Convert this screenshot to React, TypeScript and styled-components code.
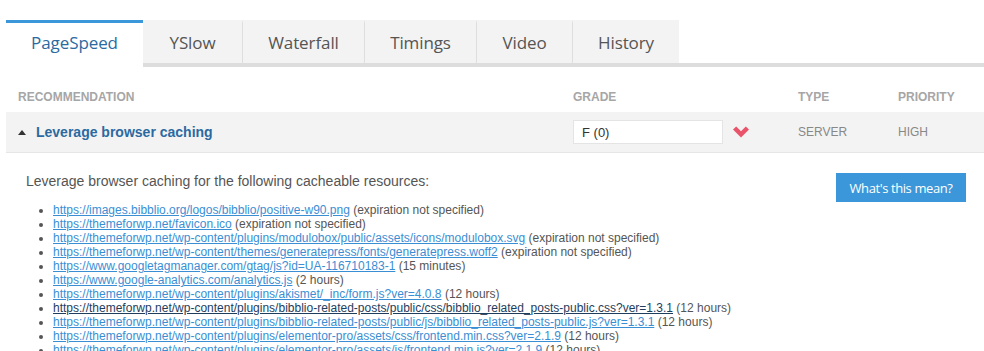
import styled, { createGlobalStyle } from 'styled-components';

const GlobalStyle = createGlobalStyle`
  html, body {
    margin: 0;
    padding: 0;
    background: #fff;
  }
  body {
    font-family: 'Liberation Sans', Arial, sans-serif;
    color: #555;
  }
`;

const tabs = [
  { label: 'PageSpeed', width: 137 },
  { label: 'YSlow', width: 99 },
  { label: 'Waterfall', width: 121 },
  { label: 'Timings', width: 111 },
  { label: 'Video', width: 95 },
  { label: 'History', width: 106 },
];

type Resource = { url: string; note: string; hover?: boolean };

const resources: Resource[] = [
  { url: 'https://images.bibblio.org/logos/bibblio/positive-w90.png', note: 'expiration not specified' },
  { url: 'https://themeforwp.net/favicon.ico', note: 'expiration not specified' },
  { url: 'https://themeforwp.net/wp-content/plugins/modulobox/public/assets/icons/modulobox.svg', note: 'expiration not specified' },
  { url: 'https://themeforwp.net/wp-content/themes/generatepress/fonts/generatepress.woff2', note: 'expiration not specified' },
  { url: 'https://www.googletagmanager.com/gtag/js?id=UA-116710183-1', note: '15 minutes' },
  { url: 'https://www.google-analytics.com/analytics.js', note: '2 hours' },
  { url: 'https://themeforwp.net/wp-content/plugins/akismet/_inc/form.js?ver=4.0.8', note: '12 hours' },
  { url: 'https://themeforwp.net/wp-content/plugins/bibblio-related-posts/public/css/bibblio_related_posts-public.css?ver=1.3.1', note: '12 hours', hover: true },
  { url: 'https://themeforwp.net/wp-content/plugins/bibblio-related-posts/public/js/bibblio_related_posts-public.js?ver=1.3.1', note: '12 hours' },
  { url: 'https://themeforwp.net/wp-content/plugins/elementor-pro/assets/css/frontend.min.css?ver=2.1.9', note: '12 hours' },
  { url: 'https://themeforwp.net/wp-content/plugins/elementor-pro/assets/js/frontend.min.js?ver=2.1.9', note: '12 hours' },
];

const Chevron = () => (
  <svg width="16" height="12" viewBox="0 0 16 12">
    <path d="M0 3.5 L3.2 0.5 L8 5.2 L12.8 0.5 L16 3.5 L8 11.5 Z" fill="#e9546a" />
  </svg>
);

const App = () => {
  return (
    <Page>
      <GlobalStyle />
      <TabBar>
        {tabs.map((t, i) => (
          <Tab
            key={t.label}
            $active={i === 0}
            $divider={i > 0 && i < tabs.length - 1}
            style={{ width: t.width }}
          >
            {t.label}
          </Tab>
        ))}
        <TabFiller />
      </TabBar>

      <HeadRow>
        <HeadCell>Recommendation</HeadCell>
        <HeadCell>Grade</HeadCell>
        <HeadCell>Type</HeadCell>
        <HeadCell>Priority</HeadCell>
      </HeadRow>

      <RuleRow>
        <RuleTitle>
          <Caret />
          Leverage browser caching
        </RuleTitle>
        <GradeCell>
          <GradeBox>F (0)</GradeBox>
          <Chevron />
        </GradeCell>
        <MetaCell>Server</MetaCell>
        <MetaCell>High</MetaCell>
      </RuleRow>

      <Details>
        <DetailsHead>
          <Intro>Leverage browser caching for the following cacheable resources:</Intro>
          <HelpButton>What's this mean?</HelpButton>
        </DetailsHead>
        <ResourceList>
          {resources.map(r => (
            <li key={r.url}>
              <ResourceLink href="#" $hover={r.hover}>
                {r.url}
              </ResourceLink>{' '}
              ({r.note})
            </li>
          ))}
        </ResourceList>
      </Details>
    </Page>
  );
};

export default App;

const Page = styled.div`
  padding: 20px 0 0 6px;
  height: 351px;
  box-sizing: border-box;
  overflow: hidden;
`;

const TabBar = styled.div`
  display: flex;
  height: 47px;
`;

const Tab = styled.div<{ $active?: boolean; $divider?: boolean }>`
  display: flex;
  align-items: center;
  justify-content: center;
  box-sizing: content-box;
  font-family: 'Open Sans', 'Noto Sans', sans-serif;
  font-size: 17px;
  letter-spacing: -0.1px;
  background: ${p => (p.$active ? '#fff' : '#f3f3f3')};
  color: ${p => (p.$active ? '#2b6aa1' : '#555')};
  border-top: 3px solid ${p => (p.$active ? '#3b97d9' : '#f3f3f3')};
  border-bottom: 4px solid ${p => (p.$active ? '#fff' : '#dddddd')};
  border-right: ${p => (p.$divider ? '1px solid #dedede' : 'none')};
  padding-bottom: 2px;
  height: 38px;
`;

const TabFiller = styled.div`
  flex: 1;
  border-bottom: 4px solid #dddddd;
  align-self: flex-end;
`;

const columns = `
  display: grid;
  grid-template-columns: 555px 225px 100px 1fr;
  padding-left: 12px;
  align-items: center;
`;

const HeadRow = styled.div`
  ${columns};
  height: 45px;
  padding-top: 15px;
  box-sizing: border-box;
`;

const HeadCell = styled.div`
  font-size: 12px;
  font-weight: bold;
  text-transform: uppercase;
  color: #a6a6a6;
`;

const RuleRow = styled.div`
  ${columns};
  height: 40px;
  background: #f3f3f3;
  border-bottom: 1px solid #e6e6e6;
`;

const RuleTitle = styled.div`
  display: flex;
  align-items: center;
  gap: 10px;
  font-size: 14px;
  font-weight: bold;
  color: #2b6aa1;
`;

const Caret = styled.span`
  width: 0;
  height: 0;
  border-left: 4px solid transparent;
  border-right: 4px solid transparent;
  border-bottom: 5px solid #333;
`;

const GradeCell = styled.div`
  display: flex;
  align-items: center;
  gap: 10px;
`;

const GradeBox = styled.div`
  width: 150px;
  height: 24px;
  box-sizing: border-box;
  display: flex;
  align-items: center;
  padding-left: 8px;
  background: #fff;
  border: 1px solid #e4e4e4;
  font-size: 13px;
  color: #333;
`;

const MetaCell = styled.div`
  font-size: 12px;
  text-transform: uppercase;
  color: #888;
`;

const Details = styled.div`
  padding: 20px 18px 0 20px;
`;

const DetailsHead = styled.div`
  display: flex;
  justify-content: space-between;
  align-items: flex-start;
`;

const Intro = styled.p`
  margin: 0;
  font-size: 14px;
  line-height: 16px;
  color: #555;
`;

const HelpButton = styled.button`
  width: 130px;
  height: 29px;
  border: none;
  background: #3b97d9;
  color: #fff;
  font-family: 'Open Sans', 'Noto Sans', sans-serif;
  font-size: 13px;
  letter-spacing: -0.4px;
  cursor: pointer;
`;

const ResourceList = styled.ul`
  margin: 1px 0 0;
  padding-left: 27px;
  font-size: 12px;
  line-height: 14px;
  color: #555;
  white-space: nowrap;
`;

const ResourceLink = styled.a<{ $hover?: boolean }>`
  color: ${p => (p.$hover ? '#1f3d5c' : '#3a8ed4')};
  text-decoration: underline;
`;
